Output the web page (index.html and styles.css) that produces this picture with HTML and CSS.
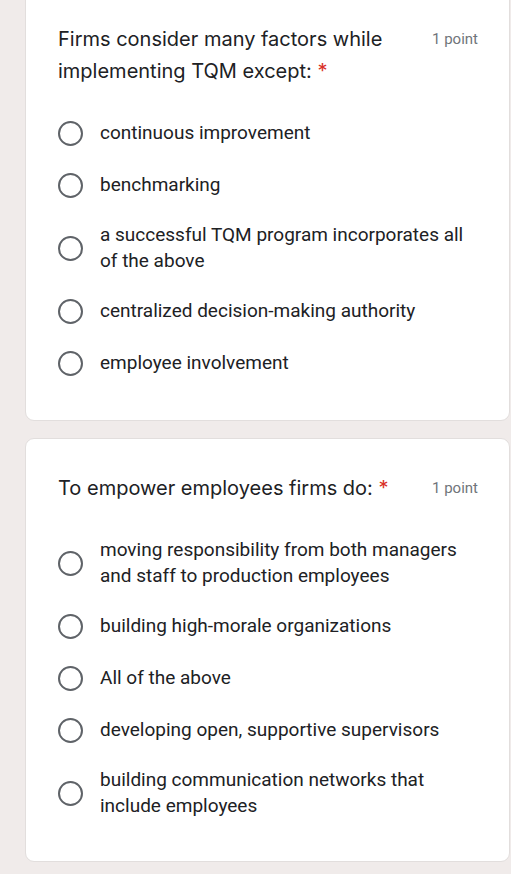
FILE: index.html
```html
<!DOCTYPE html>
<html>
<head>
<meta charset="utf-8">
<link rel="stylesheet" href="styles.css">
</head>
<body>
<div class="page">
  <section class="card card-first">
    <div class="q-head">
      <div class="q-title">Firms consider many factors while implementing TQM except: <span class="req">*</span></div>
      <div class="q-points">1 point</div>
    </div>
    <ul class="options">
      <li class="option"><span class="radio"></span><span class="label">continuous improvement</span></li>
      <li class="option"><span class="radio"></span><span class="label">benchmarking</span></li>
      <li class="option"><span class="radio"></span><span class="label">a successful TQM program incorporates all of the above</span></li>
      <li class="option"><span class="radio"></span><span class="label">centralized decision-making authority</span></li>
      <li class="option"><span class="radio"></span><span class="label">employee involvement</span></li>
    </ul>
  </section>
  <section class="card">
    <div class="q-head">
      <div class="q-title">To empower employees firms do: <span class="req">*</span></div>
      <div class="q-points">1 point</div>
    </div>
    <ul class="options options-second">
      <li class="option"><span class="radio"></span><span class="label">moving responsibility from both managers and staff to production employees</span></li>
      <li class="option"><span class="radio"></span><span class="label">building high-morale organizations</span></li>
      <li class="option"><span class="radio"></span><span class="label">All of the above</span></li>
      <li class="option"><span class="radio"></span><span class="label">developing open, supportive supervisors</span></li>
      <li class="option"><span class="radio"></span><span class="label">building communication networks that include employees</span></li>
    </ul>
  </section>
</div>
</body>
</html>
```

FILE: styles.css
```css
html, body {
  margin: 0;
  padding: 0;
  background: #f0ebea;
}
.page {
  display: flex;
  flex-direction: column;
  gap: 17px;
  padding: 0 1px 0 25px;
  overflow: hidden;
  height: 874px;
}
.card {
  background: #ffffff;
  border: 1px solid #e2dedd;
  border-radius: 9px;
  padding: 33px 31px 31px 32px;
  flex: none;
}
.card-first {
  margin-top: -11px;
}
.q-head {
  display: flex;
  align-items: flex-start;
  gap: 24px;
}
.q-title {
  flex: 1;
  font-family: "Inter", sans-serif;
  font-size: 20px;
  line-height: 32px;
  color: #202124;
}
.req {
  color: #d93025;
}
.q-points {
  font-family: "Roboto", sans-serif;
  font-size: 15px;
  color: #70757a;
  line-height: 32px;
}
.options {
  list-style: none;
  margin: 20px 0 0 0;
  padding: 0;
}
.options-second {
  margin-top: 22px;
}
.option {
  display: flex;
  align-items: center;
  gap: 17px;
  padding: 11px 0;
  min-height: 30px;
}
.radio {
  flex: none;
  width: 21px;
  height: 21px;
  border: 2.5px solid #5f6368;
  border-radius: 50%;
}
.label {
  font-family: "Roboto", sans-serif;
  font-size: 19px;
  line-height: 26px;
  color: #202124;
  padding-right: 10px;
}
```
